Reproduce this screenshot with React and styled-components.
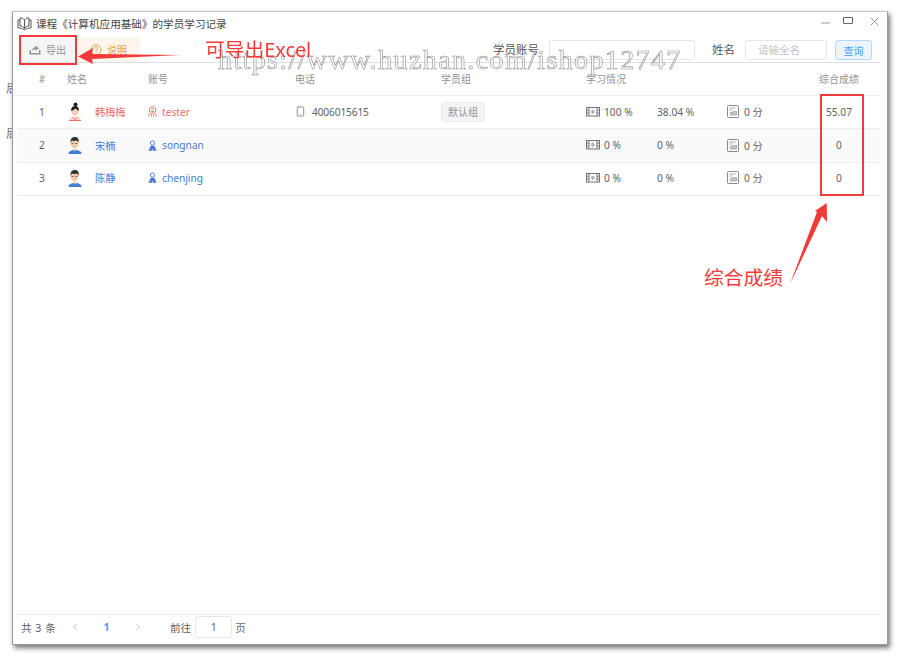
import React from 'react'
import styled, { createGlobalStyle } from 'styled-components'
import { ChevronLeft, ChevronRight, Smartphone } from 'lucide-react'

const GlobalStyle = createGlobalStyle`
  html, body {
    margin: 0;
    background: #fff;
  }
  body {
    font-family: "Noto Sans", "Noto Sans CJK SC", sans-serif;
    color: #606266;
  }
`

const Desktop = styled.div`
  position: relative;
  width: 900px;
  height: 657px;
  padding: 11px 12px 12px;
  box-sizing: border-box;
  overflow: hidden;
`

const BehindText = styled.span`
  position: absolute;
  left: 6px;
  top: ${p => p.$top}px;
  font-size: 12px;
  color: #777;
`

const Window = styled.div`
  position: relative;
  display: flex;
  flex-direction: column;
  height: 634px;
  box-sizing: border-box;
  padding: 0 7px 0 4px;
  background: #fff;
  border: 1px solid #9a9a9a;
  border-top-color: #c4c4c4;
  box-shadow: 2px 3px 5px rgba(0, 0, 0, 0.55);
`

const TitleBar = styled.div`
  display: flex;
  align-items: center;
  height: 22px;
  flex: none;
  font-size: 10.6px;
  color: #444;
`

const TitleText = styled.span`
  margin-left: 4px;
  flex: 1;
`

const WindowControls = styled.div`
  display: flex;
  align-items: center;
  margin-top: -4px;
  margin-right: 0;
  svg:first-child {
    margin-right: 11px;
  }
  svg:last-child {
    margin-left: 15px;
  }
`

const Toolbar = styled.div`
  display: flex;
  align-items: center;
  height: 28px;
  flex: none;
  border-bottom: 1px solid #dcdfe6;
  box-sizing: content-box;
`

const ExportButton = styled.div`
  display: flex;
  align-items: center;
  gap: 5px;
  width: 55px;
  height: 25px;
  margin: 3px 0 0 3px;
  padding-left: 9px;
  box-sizing: border-box;
  background: #f5f5f5;
  font-size: 10px;
  color: #909399;
`

const HelpButton = styled.div`
  display: flex;
  align-items: center;
  gap: 5px;
  width: 64px;
  height: 25px;
  margin: 3px 0 0 1px;
  padding-left: 14px;
  box-sizing: border-box;
  background: #fdf6ec;
  border-radius: 0 3px 0 0;
  font-size: 10px;
  color: #e6a23c;
`

const SearchForm = styled.div`
  display: flex;
  align-items: center;
  margin-left: auto;
  margin-right: 8px;
  margin-top: 4px;
`

const SearchLabel = styled.label`
  font-size: 11.5px;
  color: #555;
  padding-bottom: 2px;
  margin-right: ${p => p.$gap}px;
`

const SearchInput = styled.input`
  width: ${p => p.$width}px;
  height: 20px;
  box-sizing: border-box;
  margin-right: ${p => p.$gap}px;
  padding: 0 12px;
  border: 1px solid #e4e7ed;
  border-radius: 3px;
  background: #fff;
  font: 10.5px "Noto Sans", "Noto Sans CJK SC", sans-serif;
  &::placeholder {
    color: #c0c4cc;
  }
`

const QueryButton = styled.button`
  width: 37px;
  height: 20px;
  padding: 0;
  border: 1px solid #b3d8ff;
  border-radius: 3px;
  background: #ecf5ff;
  color: #409eff;
  font: 10px "Noto Sans", "Noto Sans CJK SC", sans-serif;
`

const Table = styled.div`
  flex: 1;
`

const Row = styled.div`
  display: grid;
  grid-template-columns: 50px 81px 147px 146px 145px 71px 70px 89px 46px;
  align-items: center;
  height: ${p => p.$height}px;
  box-sizing: border-box;
  padding: 0 18px ${p => p.$lift || 1}px 0;
  border-bottom: 1px solid #ebeef5;
  background: ${p => (p.$striped ? '#fafafa' : '#fff')};
  font-size: ${p => (p.$head ? 10 : 10.2)}px;
  color: ${p => (p.$head ? '#909399' : '#606266')};
`

const Cell = styled.div`
  display: flex;
  align-items: center;
  white-space: nowrap;
  gap: ${p => p.$gap || 0}px;
  justify-content: ${p => (p.$center ? 'center' : 'flex-start')};
  color: ${p => p.$color || 'inherit'};
`

const Digits = styled.span`
  letter-spacing: -0.15px;
`

const GroupTag = styled.span`
  display: inline-block;
  padding: 2px 6px;
  line-height: 14px;
  border: 1px solid #ebebeb;
  border-radius: 3px;
  background: #f4f4f5;
  color: #909399;
  font-size: 10px;
`

const Pagination = styled.div`
  display: flex;
  align-items: center;
  height: 30px;
  box-sizing: border-box;
  flex: none;
  border-top: 1px solid #ebeef5;
  font-size: 10.6px;
  color: #606266;
  padding: 0 0 5px 4px;
`

const Total = styled.span`
  width: 48px;
  word-spacing: 1px;
`

const Pager = styled.div`
  display: flex;
  align-items: center;
  width: 75px;
  justify-content: space-between;
  margin-right: 26px;
  color: #c0c4cc;
`

const CurrentPage = styled.span`
  color: #409eff;
  font-weight: 700;
`

const PageInput = styled.input`
  width: 37px;
  height: 22px;
  box-sizing: border-box;
  margin: 0 3px 0 4px;
  border: 1px solid #e4e7ed;
  border-radius: 3px;
  text-align: center;
  color: #606266;
  font: 10.5px "Noto Sans", sans-serif;
`

const Overlay = styled.svg`
  position: absolute;
  inset: 0;
  pointer-events: none;
`

const Callout = styled.span`
  position: absolute;
  left: ${p => p.$left}px;
  top: ${p => p.$top}px;
  font-size: 19.8px;
  line-height: 26px;
  color: #f33a3a;
  white-space: nowrap;
`

const RedFrame = styled.div`
  position: absolute;
  left: ${p => p.$left}px;
  top: ${p => p.$top}px;
  width: ${p => p.$width}px;
  height: ${p => p.$height}px;
  box-sizing: border-box;
  border: 2px solid #f33a3a;
`

const Watermark = styled.span`
  position: absolute;
  left: 218px;
  top: 41px;
  font-family: "Liberation Serif", serif;
  font-size: 28px;
  line-height: 38px;
  letter-spacing: 1.38px;
  color: rgba(255, 255, 255, 0.8);
  -webkit-text-stroke: 0.6px #8f8f8f;
  white-space: nowrap;
  will-change: transform;
`

const BookIcon = () => (
  <svg width="15" height="15" viewBox="0 0 15 15" fill="none" stroke="#555" strokeWidth="1">
    <path d="M7.5 4 C6 2 4 1.5 3 2 V10 C4.5 10 6.5 10.5 7.5 12.5 C8.5 10.5 10.5 10 12 10 V2 C11 1.5 9 2 7.5 4 Z M7.5 4 V12.5" />
    <path d="M3 4 H1 V12 C3.5 12 6 12.5 7.5 14 C9 12.5 11.5 12 14 12 V4 H12" />
  </svg>
)

const MinimizeIcon = () => (
  <svg width="11" height="11" viewBox="0 0 11 11"><path d="M1 7 H10" stroke="#999" strokeWidth="1" /></svg>
)

const MaximizeIcon = () => (
  <svg width="12" height="11" viewBox="0 0 12 11" fill="none"><path d="M1.5 1.5 H10.5 V7.5 H1.5 Z" stroke="#666" /></svg>
)

const CloseIcon = () => (
  <svg width="11" height="11" viewBox="0 0 11 11"><path d="M2 2 L9 9 M9 2 L2 9" stroke="#888" strokeWidth="0.9" /></svg>
)

const ExportIcon = () => (
  <svg width="12" height="10" viewBox="0 0 12 10" fill="#909399">
    <path d="M0.5 5 H2 V8 H10 V5 H11.5 V9.5 H0.5 Z" />
    <path d="M6.5 0.5 L10 3.2 L6.5 5.8 V4.2 C5 4.2 3.6 4.8 2.6 6.2 C3 3.8 4.5 2.4 6.5 2.2 Z" />
  </svg>
)

const HelpIcon = () => (
  <svg width="12" height="12" viewBox="0 0 12 12" fill="none" stroke="#e6a23c">
    <circle cx="6" cy="6" r="5" />
    <path d="M4.4 4.8 C4.4 2.9 7.6 2.9 7.6 4.7 C7.6 5.8 6 5.8 6 7.2 M6 8.2 V9.2" />
  </svg>
)

const Avatar = ({ female }) => (
  <svg width="16" height="20" viewBox="0 0 16 20">
    {female ? (
      <>
        <circle cx="8.5" cy="2.5" r="2" fill="#222" />
        <path d="M2 19 C2 15 5 14.5 8 14.5 C11 14.5 14 15 14 19 Z" fill="#fbd6d2" />
        <path d="M2 18.5 H14 M5.5 15.5 L8 17.5 L10.5 15.5" stroke="#f56c6c" strokeWidth="1" fill="none" />
        <ellipse cx="8" cy="9" rx="3.6" ry="4.6" fill="#f8cdb4" />
        <path d="M4.2 9 C3.8 4.5 7 3.6 9 4 C11.5 4.5 12.2 7 11.8 9 C10.5 7.8 9 6.8 8 6.4 C7.4 7.6 5.8 8.4 4.2 9 Z" fill="#222" />
      </>
    ) : (
      <>
        <path d="M1.5 19 C1.5 16 4.5 15 8 15 C11.5 15 14.5 16 14.5 19 Z" fill="#3f7fd0" />
        <path d="M6 14 L8 16.5 L10 14 Z" fill="#f4c9ad" />
        <ellipse cx="7.5" cy="8.5" rx="3.8" ry="5" fill="#f4c9ad" />
        <path d="M3.6 8 C3 3.5 5.5 2 8 2 C11 2 12.3 4.5 11.5 8 C11 6.5 10.5 5.8 10 5.4 C8.2 6 5.8 6 4.8 5.6 C4.4 6.4 4 7 3.6 8 Z" fill="#2e2e2e" />
        <path d="M4.5 8.5 H6.8 M8.2 8.5 H10.5" stroke="#555" strokeWidth="0.7" />
      </>
    )}
  </svg>
)

const PersonIcon = ({ color, female }) => (
  <svg width="9" height="11" viewBox="0 0 9 11" fill="none" stroke={color}>
    {female ? (
      <>
        <path d="M1.5 6 V3.2 C1.5 0 7.5 0 7.5 3.2 V6 M3 3 H6 M3 5.5 H6" />
        <path d="M1 10.5 V8.5 C1 7.6 2 7 3 7 H6 C7 7 8 7.6 8 8.5 V10.5 M3.5 10.5 V8.5 M5.5 10.5 V8.5" />
      </>
    ) : (
      <>
        <circle cx="4.5" cy="3" r="2.1" strokeWidth="0.9" />
        <path d="M2.8 6 L0.8 10.5 H3.8 L4.5 8 L5.2 10.5 H8.2 L6.2 6 Z" fill={color} strokeWidth="0.5" />
      </>
    )}
  </svg>
)

const FilmIcon = () => (
  <svg width="14" height="10" viewBox="0 0 14 10" fill="none" stroke="#77727c">
    <rect x="0.5" y="0.5" width="13" height="8.5" />
    <path d="M3 0.5 V9 M11 0.5 V9 M0.5 3.2 H3 M0.5 6 H3 M11 3.2 H13.5 M11 6 H13.5" />
    <path d="M6 3 L8.5 4.8 L6 6.5 Z" strokeWidth="0.8" />
  </svg>
)

const ScoreIcon = () => (
  <svg width="12" height="13" viewBox="0 0 12 13" fill="none" stroke="#8a8a8a">
    <rect x="0.5" y="0.5" width="11" height="12" rx="1" />
    <path d="M2.5 3 H8.5 M2.5 5 H5.5" strokeWidth="0.7" />
    <path d="M6 6.5 H9.5 V10 H3.5 V7.5 H6 Z" fill="#c8c8c8" strokeWidth="0.6" />
  </svg>
)

const students = [
  { no: 1, name: '韩梅梅', account: 'tester', phone: '4006015615', group: '默认组', progress: '100 %', rate: '38.04 %', score: '0 分', total: '55.07', female: true },
  { no: 2, name: '宋楠', account: 'songnan', progress: '0 %', rate: '0 %', score: '0 分', total: '0' },
  { no: 3, name: '陈静', account: 'chenjing', progress: '0 %', rate: '0 %', score: '0 分', total: '0' },
]

export default function App () {
  return (
    <Desktop>
      <GlobalStyle />
      <BehindText $top={79}>后</BehindText>
      <BehindText $top={124}>后</BehindText>
      <Window>
        <TitleBar>
          <BookIcon />
          <TitleText>课程《计算机应用基础》的学员学习记录</TitleText>
          <WindowControls>
            <MinimizeIcon />
            <MaximizeIcon />
            <CloseIcon />
          </WindowControls>
        </TitleBar>
        <Toolbar>
          <ExportButton><ExportIcon />导出</ExportButton>
          <HelpButton><HelpIcon />说明</HelpButton>
          <SearchForm>
            <SearchLabel $gap={10}>学员账号</SearchLabel>
            <SearchInput $width={146} $gap={17} />
            <SearchLabel $gap={10}>姓名</SearchLabel>
            <SearchInput $width={82} $gap={8} placeholder='请输全名' />
            <QueryButton>查询</QueryButton>
          </SearchForm>
        </Toolbar>
        <Table>
          <Row $head $height={33}>
            <Cell $center>#</Cell>
            <Cell>姓名</Cell>
            <Cell>账号</Cell>
            <Cell>电话</Cell>
            <Cell>学员组</Cell>
            <Cell>学习情况</Cell>
            <Cell />
            <Cell />
            <Cell $center>综合成绩</Cell>
          </Row>
          {students.map(s => {
            const color = s.female ? '#f56c6c' : '#4a7bd4'
            return (
              <Row key={s.no} $height={s.no === 2 ? 34 : 33} $striped={s.no === 2} $lift={s.no === 3 ? 3 : 1}>
                <Cell $center>{s.no}</Cell>
                <Cell $gap={12} $color={color}><Avatar female={s.female} />{s.name}</Cell>
                <Cell $gap={5} $color={color}><PersonIcon color={color} female={s.female} />{s.account}</Cell>
                <Cell $gap={6}>
                  {s.phone && <Smartphone size={11} color='#888' />}
                  {s.phone && <Digits>{s.phone}</Digits>}
                </Cell>
                <Cell>{s.group && <GroupTag>{s.group}</GroupTag>}</Cell>
                <Cell $gap={4}><FilmIcon />{s.progress}</Cell>
                <Cell>{s.rate}</Cell>
                <Cell $gap={5}><ScoreIcon />{s.score}</Cell>
                <Cell $center>{s.total}</Cell>
              </Row>
            )
          })}
        </Table>
        <Pagination>
          <Total>共 3 条</Total>
          <Pager>
            <ChevronLeft size={12} />
            <CurrentPage>1</CurrentPage>
            <ChevronRight size={12} />
          </Pager>
          前往
          <PageInput defaultValue='1' />
          页
        </Pagination>
      </Window>
      <Watermark>https://www.huzhan.com/ishop12747</Watermark>
      <RedFrame $left={19} $top={35} $width={58} $height={30} />
      <RedFrame $left={820} $top={94} $width={44} $height={102} />
      <Callout $left={205} $top={37}>可导出Excel</Callout>
      <Callout $left={704} $top={265}>综合成绩</Callout>
      <Overlay width='900' height='657' viewBox='0 0 900 657'>
        <path d='M78 56.5 L93 48 L92 54 L181 55 L92 59 L93 64 Z' fill='#f33a3a' />
        <path d='M826.7 203 L827 222 L822 216 L790 284 L817 212 L815 211 Z' fill='#f33a3a' />
      </Overlay>
    </Desktop>
  )
}
